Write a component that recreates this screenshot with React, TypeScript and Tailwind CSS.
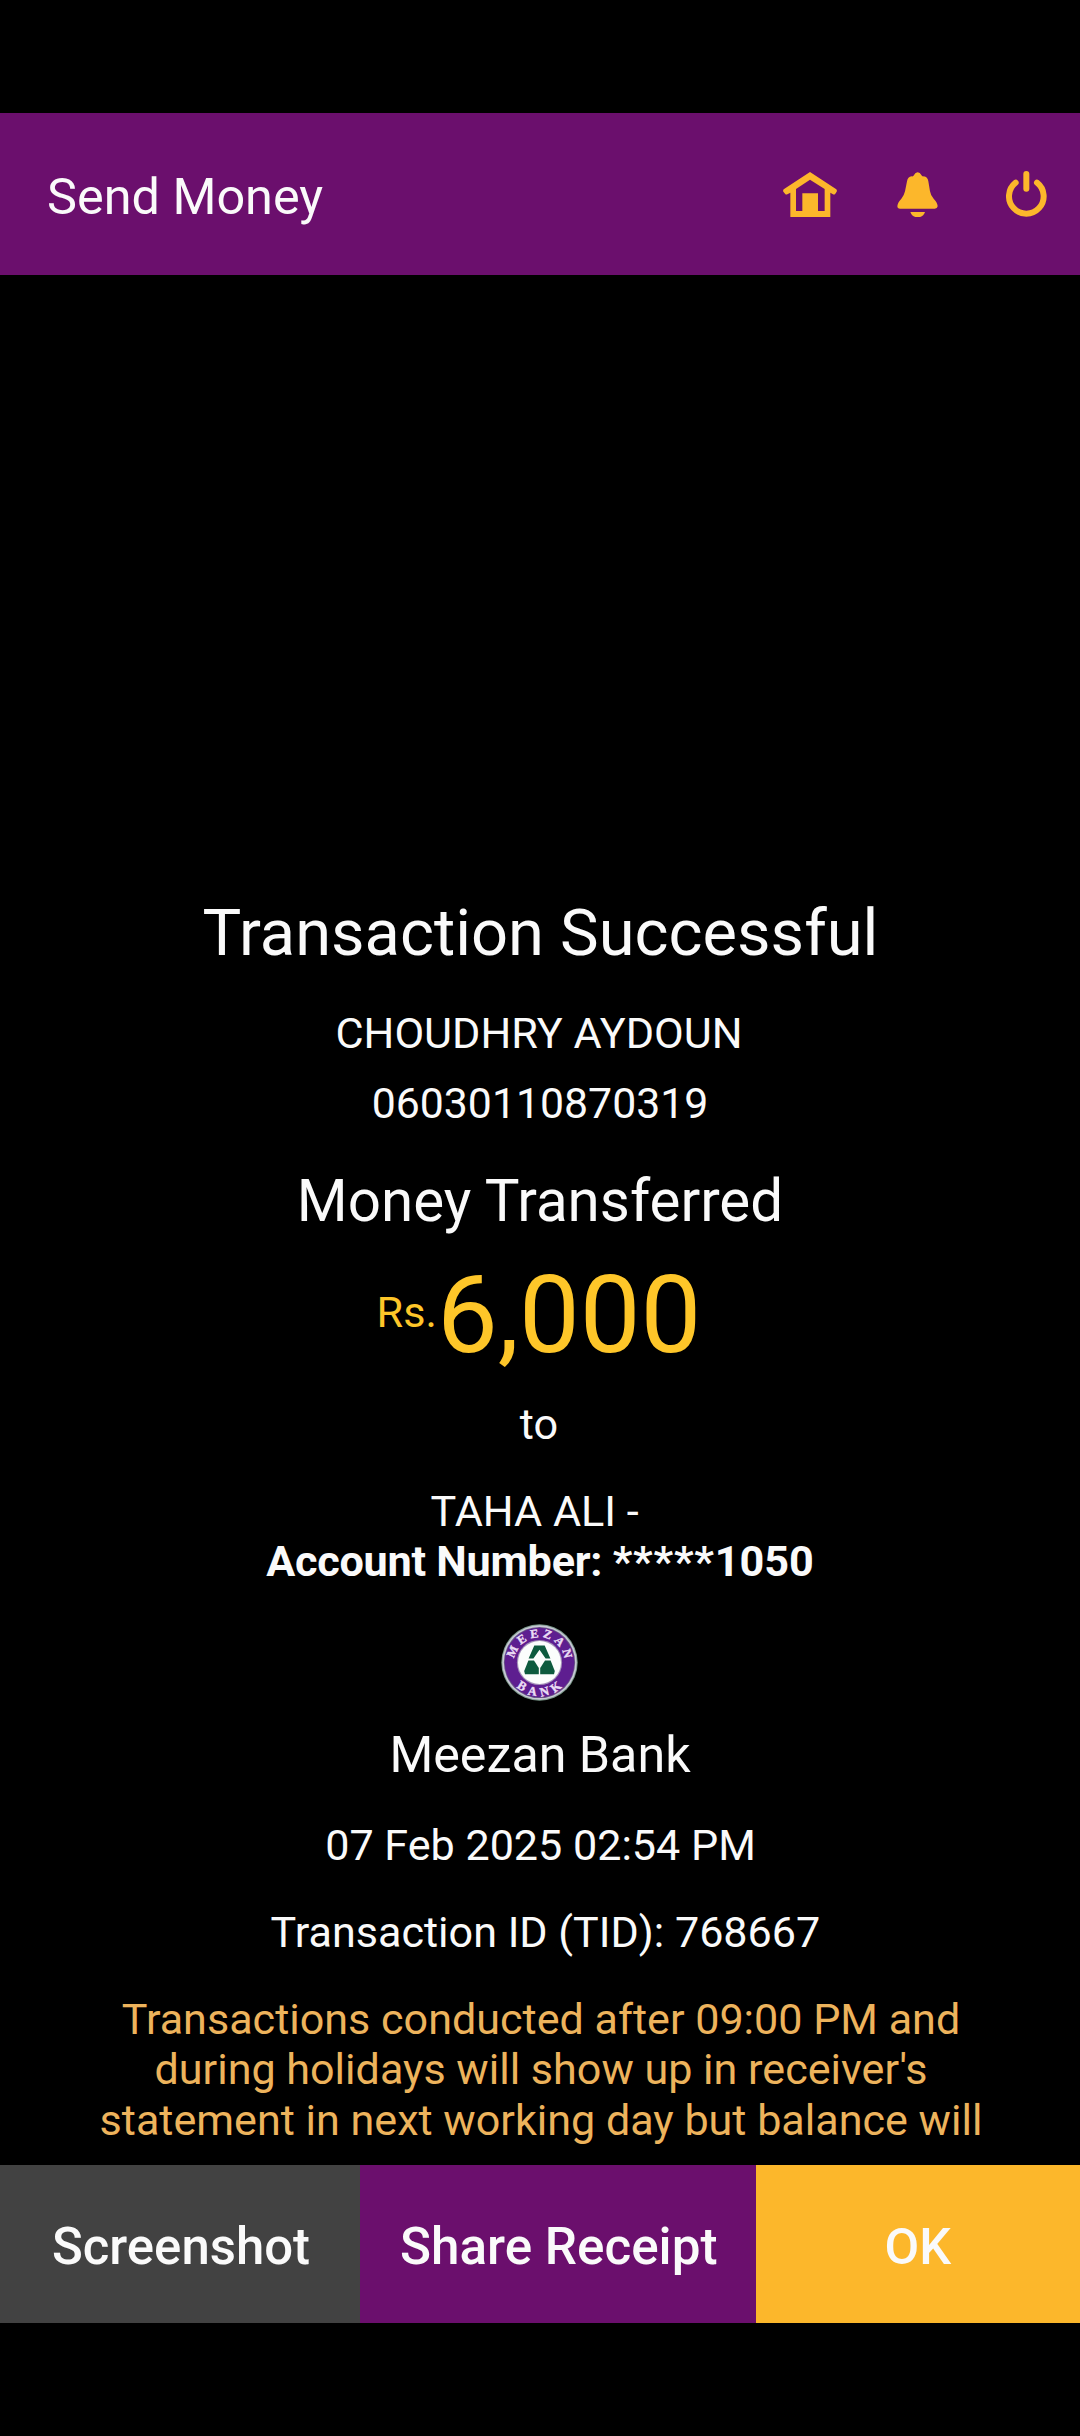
function HomeIcon() {
  return (
    <svg className="h-[45.3px] w-[54px]" viewBox="68 215 162 136" fill="#fcb72b">
      <path d="M149 215 L228 267 Q231 270 229 274 L225 280 Q222 284 218 282 L210 277 V351 H90 V277 L81 282 Q77 284 74 280 L69 274 Q67 270 70 267 Z M149 238 L107 266 V332 H126 V279 H173 V332 H193 V266 Z" fillRule="evenodd" />
    </svg>
  );
}

function BellIcon() {
  return (
    <svg className="h-[45.3px] w-[40.7px]" viewBox="411 216 122 136" fill="#fcb72b">
      <path d="M473 217 Q480 217 484 225 Q486 230 491 229 Q503 230 505 244 L510 274 Q512 287 521 296 Q533 309 533 319 Q532 326 524 326 H420 Q412 326 412 319 Q412 309 424 296 Q432 287 435 274 L441 244 Q443 230 455 229 Q460 230 462 225 Q466 217 473 217 Z" />
      <path d="M451 336 H495 Q490 352 473 352 Q456 352 451 336 Z" />
    </svg>
  );
}

function PowerIcon() {
  return (
    <svg className="h-[47px] w-[41px]" viewBox="738 212 123 141" fill="none" stroke="#fcb72b" strokeWidth="18" strokeLinecap="round">
      <path d="M799 221 V265" />
      <path d="M767 247 A52 52 0 1 0 831 247" />
    </svg>
  );
}

function BankLogo() {
  return (
    <svg className="h-[77px] w-[77px]" viewBox="0 0 77 77">
      <defs>
        <path id="arc-top" d="M13.7 43 A25.2 25.2 0 1 1 63.3 43" />
        <path id="arc-bottom" d="M5 38.5 A33.5 33.5 0 0 0 72 38.5" />
      </defs>
      <circle cx="38.5" cy="38.5" r="38.2" fill="#7d9b8c" />
      <circle cx="38.5" cy="38.5" r="37.2" fill="#c9c8d6" />
      <circle cx="38.5" cy="38.5" r="35.6" fill="#6a5a86" />
      <circle cx="38.5" cy="38.5" r="34.8" fill="#5e1e90" />
      <circle cx="38.5" cy="38.5" r="22.6" fill="#a593ba" />
      <circle cx="38.5" cy="38.5" r="21.5" fill="#fbfdfc" />
      <g fill="#0d5a3e">
        <path d="M33.3 21.5 H43.7 L49.4 34.4 H44.6 L38.5 25.8 L32.4 34.4 H27.6 Z" />
        <path d="M27.4 36.4 H33 L37.8 44 V50.3 H24 L23.2 47 Z" />
        <path d="M49.6 36.4 H44 L39.2 44 V50.3 H53 L53.8 47 Z" />
      </g>
      <g className="font-['Liberation_Serif',serif] font-bold" fill="#eadcf4" stroke="#eadcf4" strokeWidth="0.4" textAnchor="middle">
        <text className="text-[12.2px]" letterSpacing="3.6">
          <textPath href="#arc-top" startOffset="52%">MEEZAN</textPath>
        </text>
        <text className="text-[12.6px]" letterSpacing="4.6">
          <textPath href="#arc-bottom" startOffset="52%">BANK</textPath>
        </text>
      </g>
    </svg>
  );
}

const actions = [
  { label: "Screenshot", style: "w-[360px] bg-[#424242] pl-0.5 text-[50.9px]" },
  { label: "Share Receipt", style: "w-[395.5px] bg-[#6b0f6d] pl-0.5 text-[51.2px]" },
  { label: "OK", style: "flex-1 bg-[#fcb72b] text-[50.4px]" },
];

export default function App() {
  return (
    <div className="flex h-[2436px] w-[1080px] flex-col overflow-hidden bg-black font-[Roboto,sans-serif] text-[#fafafa]">
      <header className="mt-[113px] flex h-[162px] shrink-0 items-center bg-[#6b0f6d] pr-[33px] pl-[47px]">
        <h1 className="flex-1 pt-1.5 text-[50.4px] leading-[58px]">Send Money</h1>
        <div className="flex items-center pt-px">
          <HomeIcon />
          <div className="ml-[60.3px] flex"><BellIcon /></div>
          <div className="ml-[68.3px] flex"><PowerIcon /></div>
        </div>
      </header>

      <main className="flex flex-1 flex-col items-center pt-[620px] text-center text-[43.2px] leading-[50px] whitespace-pre">
        <h2 className="pl-px text-[65px] leading-[76px]">Transaction Successful</h2>
        <p className="mt-[38px] pr-0.5">CHOUDHRY AYDOUN</p>
        <p className="mt-[19px] text-[42.8px]">06030110870319</p>
        <h3 className="mt-[39px] text-[58.3px] leading-[68px]">Money Transferred</h3>
        <div className="mt-[17px] flex h-[126px] items-center pr-0.5 text-[#fec629]">
          <span className="pb-[5px]">Rs.</span>
          <span className="text-[108.2px] leading-[126px]">6,000</span>
        </div>
        <p className="mt-[22px] pr-0.5">to</p>
        <p className="mt-[37px]">{"TAHA ALI - "}</p>
        <p className="font-bold">
          <span className="tracking-[-0.25px]">Account Number: </span>
          <span className="tracking-[0.8px]">*****</span>1050
        </p>
        <div className="mt-[37px] flex pr-px"><BankLogo /></div>
        <p className="mt-[25px] text-[50.2px] leading-[58px]">Meezan Bank</p>
        <p className="mt-[37px] pl-px text-[43.1px]">07 Feb 2025 02:54 PM</p>
        <p className="mt-[37px] pl-px text-[43.1px]">{" Transaction ID (TID): 768667"}</p>
        <p className="mt-[37px] pl-0.5 text-[43.1px] leading-[50.4px] text-[#edb35c]">
          {"Transactions conducted after 09:00 PM and\nduring holidays will show up in receiver's\nstatement in next working day but balance will"}
        </p>
      </main>

      <footer className="mb-[113px] flex h-[158px] shrink-0 font-medium">
        {actions.map((a) => (
          <button key={a.label} className={`flex items-center justify-center pt-1.5 leading-[58px] ${a.style}`}>
            {a.label}
          </button>
        ))}
      </footer>
    </div>
  );
}
